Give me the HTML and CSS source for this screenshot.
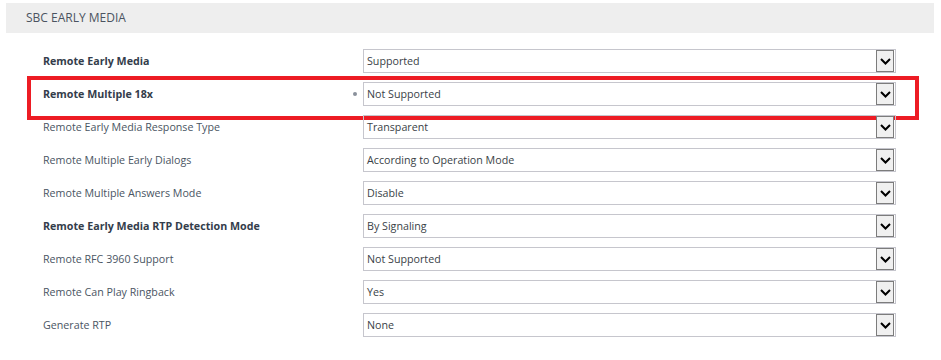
FILE: index.html
```html
<!DOCTYPE html>
<html lang="en">
<head>
    <meta charset="UTF-8">
    <title>SBC Early Media</title>
    <link rel="stylesheet" href="styles.css">
</head>
<body>
    <div class="section-title">SBC EARLY MEDIA</div>

    <div class="form-rows">
        <div class="row">
            <div class="label bold">Remote Early Media</div>
            <div class="select"><span class="value">Supported</span><span class="arrow"><svg width="11" height="7" viewBox="0 0 11 7"><polyline points="1,1 5.5,5.5 10,1" fill="none" stroke="#000" stroke-width="2"/></svg></span></div>
        </div>
        <div class="row highlight">
            <div class="label bold">Remote Multiple 18x<span class="dot"></span></div>
            <div class="select"><span class="value">Not Supported</span><span class="arrow"><svg width="11" height="7" viewBox="0 0 11 7"><polyline points="1,1 5.5,5.5 10,1" fill="none" stroke="#000" stroke-width="2"/></svg></span></div>
        </div>
        <div class="row">
            <div class="label">Remote Early Media Response Type</div>
            <div class="select"><span class="value">Transparent</span><span class="arrow"><svg width="11" height="7" viewBox="0 0 11 7"><polyline points="1,1 5.5,5.5 10,1" fill="none" stroke="#000" stroke-width="2"/></svg></span></div>
        </div>
        <div class="row">
            <div class="label">Remote Multiple Early Dialogs</div>
            <div class="select"><span class="value">According to Operation Mode</span><span class="arrow"><svg width="11" height="7" viewBox="0 0 11 7"><polyline points="1,1 5.5,5.5 10,1" fill="none" stroke="#000" stroke-width="2"/></svg></span></div>
        </div>
        <div class="row">
            <div class="label">Remote Multiple Answers Mode</div>
            <div class="select"><span class="value">Disable</span><span class="arrow"><svg width="11" height="7" viewBox="0 0 11 7"><polyline points="1,1 5.5,5.5 10,1" fill="none" stroke="#000" stroke-width="2"/></svg></span></div>
        </div>
        <div class="row">
            <div class="label bold">Remote Early Media RTP Detection Mode</div>
            <div class="select"><span class="value">By Signaling</span><span class="arrow"><svg width="11" height="7" viewBox="0 0 11 7"><polyline points="1,1 5.5,5.5 10,1" fill="none" stroke="#000" stroke-width="2"/></svg></span></div>
        </div>
        <div class="row">
            <div class="label">Remote RFC 3960 Support</div>
            <div class="select"><span class="value">Not Supported</span><span class="arrow"><svg width="11" height="7" viewBox="0 0 11 7"><polyline points="1,1 5.5,5.5 10,1" fill="none" stroke="#000" stroke-width="2"/></svg></span></div>
        </div>
        <div class="row">
            <div class="label">Remote Can Play Ringback</div>
            <div class="select"><span class="value">Yes</span><span class="arrow"><svg width="11" height="7" viewBox="0 0 11 7"><polyline points="1,1 5.5,5.5 10,1" fill="none" stroke="#000" stroke-width="2"/></svg></span></div>
        </div>
        <div class="row">
            <div class="label">Generate RTP</div>
            <div class="select"><span class="value">None</span><span class="arrow"><svg width="11" height="7" viewBox="0 0 11 7"><polyline points="1,1 5.5,5.5 10,1" fill="none" stroke="#000" stroke-width="2"/></svg></span></div>
        </div>
    </div>
</body>
</html>
```

FILE: styles.css
```css
* {
    margin: 0;
    padding: 0;
    box-sizing: border-box;
}

body {
    font-family: 'Open Sans', 'Liberation Sans', sans-serif;
    background: #fff;
    color: #4a5563;
}

.section-title {
    margin: 3px 7px 0 6px;
    height: 30px;
    line-height: 30px;
    padding-left: 20px;
    background: #eeeeee;
    font-size: 12px;
    color: #4b5360;
}

.form-rows {
    padding-top: 12px;
}

.row {
    position: relative;
    display: flex;
    align-items: center;
    height: 33px;
    padding: 4px 0 5px;
}

.label {
    width: 363px;
    padding-left: 43px;
    padding-right: 6px;
    display: flex;
    justify-content: space-between;
    align-items: center;
    font-size: 10.7px;
    line-height: 22px;
    color: #4a5563;
}

.label.bold {
    font-weight: 700;
    color: #333d4b;
}

.dot {
    width: 4px;
    height: 4px;
    border-radius: 50%;
    background: #8a909b;
}

.select {
    width: 533px;
    height: 24px;
    border: 1px solid #c6c6cd;
    display: flex;
    align-items: stretch;
    font-size: 10.7px;
    color: #3a3f47;
}

.select .value {
    flex: 1;
    padding-left: 3px;
    line-height: 22px;
}

.select .arrow {
    width: 18px;
    margin-right: 1px;
    border: 1px solid #7c7c7c;
    background: #f0f0f0;
    display: flex;
    align-items: center;
    justify-content: center;
}

/* red marker round the changed row */
.highlight::after {
    content: "";
    position: absolute;
    left: 27px;
    top: -2px;
    width: 884px;
    height: 36px;
    border: 4px solid #ed1c24;
    pointer-events: none;
}
```
